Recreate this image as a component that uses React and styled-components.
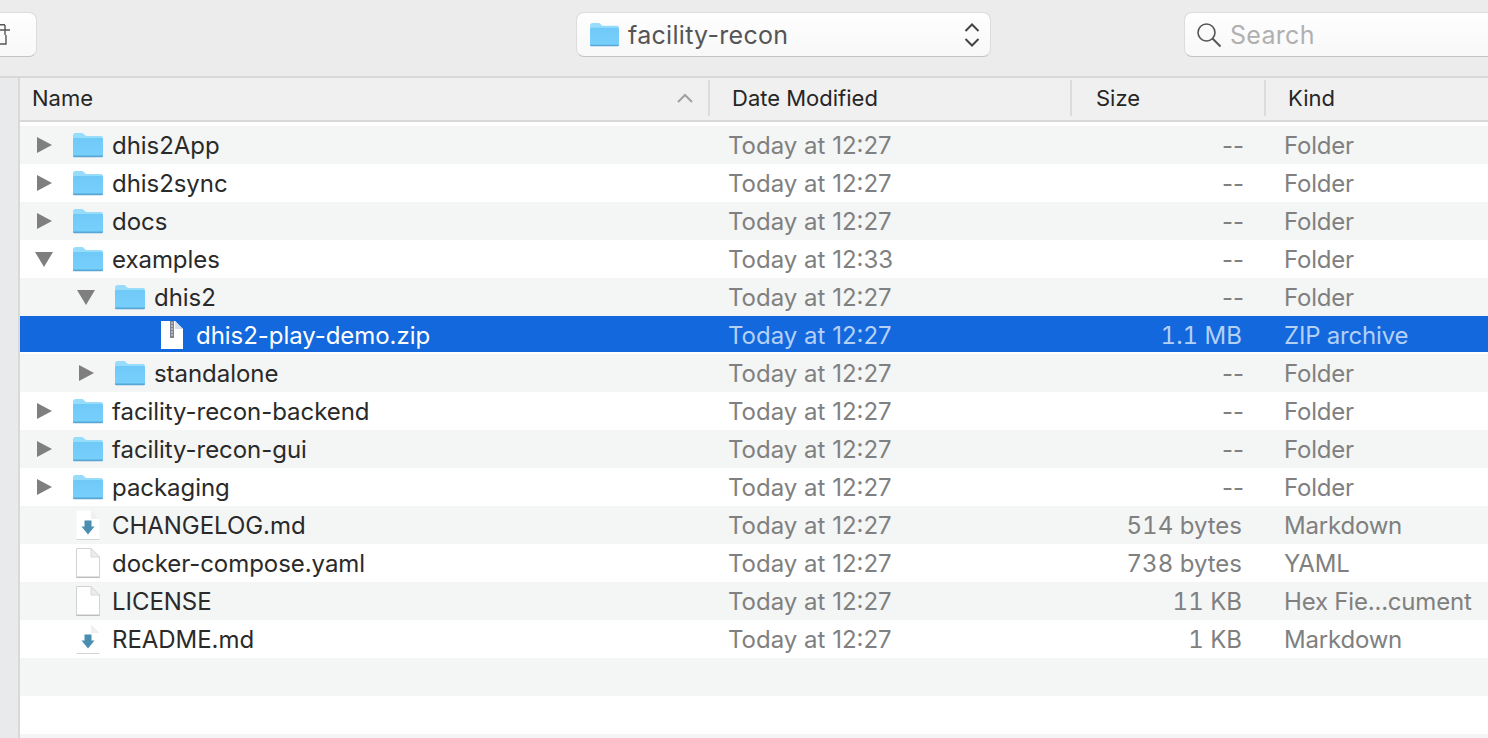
import React from "react";
import styled, { createGlobalStyle } from "styled-components";

const Global = createGlobalStyle`
  html, body { margin: 0; padding: 0; background: #fff; overflow: hidden; }
  body { font-family: Inter, "Liberation Sans", sans-serif; }
`;
const Page = styled.div`
  width: 1488px; height: 738px; overflow: hidden; display: flex; flex-direction: column;
`;
const Toolbar = styled.div`
  flex: none; background: #ececec; border-bottom: 2px solid #d8d8d8;
  display: flex; align-items: flex-start; padding-top: 12px; height: 64px;
`;
const ToolButton = styled.div`
  width: 37px; height: 45px; flex: none; box-sizing: border-box; background: linear-gradient(#fefefe, #f8f8f8);
  border-radius: 0 8px 8px 0; border: 1px solid #dcdcdc; border-left: none; border-bottom-color: #c4c4c4;
  display: flex; align-items: center; overflow: hidden;
`;
const PathPopup = styled.div`
  width: 415px; height: 45px; flex: none; margin-left: 539px; box-sizing: border-box;
  background: linear-gradient(#fefefe, #f8f8f8); border-radius: 8px; border: 1px solid #dcdcdc; border-bottom-color: #c4c4c4;
  display: flex; align-items: center; padding: 0 10px 0 12px; gap: 8px;
  font-size: 25px; color: #555; letter-spacing: 0.3px;
`;
const PathLabel = styled.span` flex: 1; `;
const SearchField = styled.div`
  flex: none; width: 320px; height: 45px; margin-left: 193px; box-sizing: border-box;
  background: linear-gradient(#fefefe, #f8f8f8); border-radius: 8px 0 0 8px; border: 1px solid #dcdcdc; border-right: none; border-bottom-color: #c4c4c4;
  display: flex; align-items: center; padding-left: 11px; gap: 8px;
  font-size: 25px; color: #b0b0b0; letter-spacing: 0.3px;
`;
const Main = styled.div` flex: 1; display: flex; min-height: 0; `;
const Sidebar = styled.div`
  width: 18px; flex: none; background: #e9eaeb; border-right: 2px solid #d9d9d9;
`;
const ListPane = styled.div` flex: 1; min-width: 0; display: flex; flex-direction: column; `;
const Header = styled.div`
  height: 40px; flex: none; background: #f0f0f0; border-bottom: 2px solid #d8d8d8; padding-bottom: 2px;
  display: grid; grid-template-columns: 690px 362px 194px 1fr; align-items: center;
  font-size: 22px; color: #262626;
`;
const HeadCell = styled.div`
  height: 36px; display: flex; align-items: center; justify-content: space-between; box-sizing: border-box;
  padding-left: ${p => p.$pad}px; padding-right: 15px;
  border-right: ${p => (p.$last ? "none" : "2px solid #dcdcdc")};
`;
const Rows = styled.div` padding-top: 4px; flex: 1; `;
const Row = styled.div`
  height: 38px; display: grid; grid-template-columns: 690px 362px 194px 1fr; align-items: center;
  font-size: 24px;
  background: ${p => (p.$selected ? "#1268dc" : p.$odd ? "#f4f5f5" : "#fff")};
  box-shadow: ${p => (p.$selected ? "inset 0 -2px 0 #fff" : "none")};
  color: ${p => (p.$selected ? "#fff" : "#2a2a2a")};
`;
const NameCell = styled.div`
  display: flex; align-items: center; height: 100%; padding-left: ${p => p.$depth * 42}px; white-space: nowrap;
  letter-spacing: -0.05px;
`;
const TriangleSlot = styled.div` width: 52px; flex: none; display: flex; justify-content: flex-start; padding-left: 16px; box-sizing: border-box; `;
const IconSlot = styled.div`
  width: 40px; flex: none; display: flex; justify-content: flex-start;
  padding-left: ${p => (p.$doc ? 4 : 0)}px; box-sizing: border-box;
`;
const mutedColor = p => (p.$selected ? "#b4d0f7" : "#808080");
const DateCell = styled.div`
  padding-left: 18px; color: ${mutedColor};
`;
const SizeCell = styled.div`
  text-align: right; padding-right: ${p => (p.$empty ? 22 : 24)}px;
  font-feature-settings: ${p => (p.$empty ? "normal" : '"tnum"')};
  color: ${mutedColor};
`;
const KindCell = styled.div`
  padding-left: 18px; white-space: nowrap; letter-spacing: -0.2px;
  color: ${mutedColor};
`;

const Folder = ({ w = 32, h = 26 }) => (
  <svg width={w} height={h} viewBox="0 0 32 26">
    <defs>
      <linearGradient id="fb" x1="0" y1="0" x2="0" y2="1">
        <stop offset="0" stopColor="#6fc9f7" />
        <stop offset="1" stopColor="#78d0fc" />
      </linearGradient>
    </defs>
    <path d="M1 3.5C1 2 2 1 3.5 1H9.5C11 1 11.5 1.6 12.3 2.6C12.9 3.4 13.5 4 14.5 4H29C30.4 4 31 5 31 6V23C31 24.3 30.3 25 29 25H3C1.7 25 1 24.3 1 23Z" fill="#98dcfc" />
    <path d="M1 7.5C1 6.6 1.6 6 2.5 6H29.5C30.4 6 31 6.6 31 7.5V23C31 24.3 30.3 25 29 25H3C1.7 25 1 24.3 1 23Z" fill="url(#fb)" />
    <path d="M1 23.6H31V23.9C31 24.6 30.3 25.2 29 25.2H3C1.7 25.2 1 24.6 1 23.9Z" fill="#56a6d6" />
  </svg>
);
const TriRight = () => (
  <svg width="16" height="18" viewBox="0 0 16 18"><path d="M1 1L16 9L1 17Z" fill="#7f7f7f" /></svg>
);
const TriDown = () => (
  <svg width="18" height="16" viewBox="0 0 18 16" overflow="visible"><path d="M-1 1H17L8 16Z" fill="#7f7f7f" /></svg>
);
const ZipDoc = () => (
  <svg width="24" height="30" viewBox="0 0 24 30">
    <path d="M1 1H15L23 9V29H1Z" fill="#fff" />
    <path d="M15 1V9H23" fill="#d8dfe9" />
    <rect x="10" y="1" width="4" height="17" fill="#7d8490" />
    <path d="M11 3h2M11 6h2M11 9h2M11 12h2M11 15h2" stroke="#e4e4e4" strokeWidth="1" />
  </svg>
);
const PlainDoc = () => (
  <svg width="24" height="30" viewBox="0 0 24 30">
    <path d="M0.5 0.5H15L23.5 9V29.5H0.5Z" fill="#fff" stroke="#d2d2d2" strokeWidth="1" />
    <path d="M15 0.5V9H23.5Z" fill="#ececec" stroke="#d8d8d8" strokeWidth="1" />
    <path d="M0.5 29.3H23.5" stroke="#bdbdbd" strokeWidth="1.5" />
  </svg>
);
const MdDoc = () => (
  <svg width="24" height="30" viewBox="0 0 24 30">
    <path d="M0.5 0.5H15L23.5 9V29.5H0.5Z" fill="#fff" />
    <path d="M15 0.5V9H23.5Z" fill="#f0f0f0" />
    <path d="M0.5 29.5H23.5" stroke="#d4d4d4" strokeWidth="1" />
    <path d="M8.5 10.5H15.5V16.5H18.5L12 24.5L5.5 16.5H8.5Z" fill="#4b8fb0" />
  </svg>
);

const rows = [
  { n: "dhis2App", d: 0, t: "r", i: "f", date: "12:27", s: "--", k: "Folder" },
  { n: "dhis2sync", d: 0, t: "r", i: "f", date: "12:27", s: "--", k: "Folder" },
  { n: "docs", d: 0, t: "r", i: "f", date: "12:27", s: "--", k: "Folder" },
  { n: "examples", d: 0, t: "d", i: "f", date: "12:33", s: "--", k: "Folder" },
  { n: "dhis2", d: 1, t: "d", i: "f", date: "12:27", s: "--", k: "Folder" },
  { n: "dhis2-play-demo.zip", d: 2, i: "z", date: "12:27", s: "1.1 MB", k: "ZIP archive", sel: true },
  { n: "standalone", d: 1, t: "r", i: "f", date: "12:27", s: "--", k: "Folder" },
  { n: "facility-recon-backend", d: 0, t: "r", i: "f", date: "12:27", s: "--", k: "Folder" },
  { n: "facility-recon-gui", d: 0, t: "r", i: "f", date: "12:27", s: "--", k: "Folder" },
  { n: "packaging", d: 0, t: "r", i: "f", date: "12:27", s: "--", k: "Folder" },
  { n: "CHANGELOG.md", d: 0, i: "m", date: "12:27", s: "514 bytes", k: "Markdown" },
  { n: "docker-compose.yaml", d: 0, i: "p", date: "12:27", s: "738 bytes", k: "YAML" },
  { n: "LICENSE", d: 0, i: "p", date: "12:27", s: "11 KB", k: "Hex Fie...cument" },
  { n: "README.md", d: 0, i: "m", date: "12:27", s: "1 KB", k: "Markdown" },
];
const icons = { f: <Folder />, z: <ZipDoc />, m: <MdDoc />, p: <PlainDoc /> };

export default function App() {
  return (
    <Page>
      <Global />
      <Toolbar>
        <ToolButton>
          <svg width="12" height="24" viewBox="0 0 12 24" fill="none" stroke="#555" strokeWidth="1.4">
            <path d="M0 1.7H5M6 12V21H0" />
            <path d="M0 7H10M5 2V12" />
          </svg>
        </ToolButton>
        <PathPopup>
          <Folder w={31} h={25} />
          <PathLabel>facility-recon</PathLabel>
          <svg width="16" height="26" viewBox="0 0 16 26" fill="none" stroke="#444" strokeWidth="2">
            <path d="M1.5 9L8 2.5L14.5 9M1.5 17L8 23.5L14.5 17" />
          </svg>
        </PathPopup>
        <SearchField>
          <svg width="26" height="26" viewBox="0 0 26 26" fill="none" stroke="#555" strokeWidth="1.6">
            <circle cx="10.5" cy="10.5" r="8.5" />
            <path d="M16.5 16.5L24.5 24.5" strokeWidth="2" />
          </svg>
          Search
        </SearchField>
      </Toolbar>
      <Main>
        <Sidebar />
        <ListPane>
          <Header>
            <HeadCell $pad={12}>
              Name
              <svg width="16" height="10" viewBox="0 0 16 10" fill="none" stroke="#a0a0a0" strokeWidth="2">
                <path d="M1 9L8 2L15 9" />
              </svg>
            </HeadCell>
            <HeadCell $pad={22}>Date Modified</HeadCell>
            <HeadCell $pad={24}>Size</HeadCell>
            <HeadCell $pad={22} $last>Kind</HeadCell>
          </Header>
          <Rows>
            {rows.map((r, i) => (
              <Row key={r.n} $odd={i % 2 === 0} $selected={r.sel}>
                <NameCell $depth={r.d}>
                  <TriangleSlot>{r.t === "r" ? <TriRight /> : r.t === "d" ? <TriDown /> : null}</TriangleSlot>
                  <IconSlot $doc={r.i !== "f"}>{icons[r.i]}</IconSlot>
                  {r.n}
                </NameCell>
                <DateCell $selected={r.sel}>Today at {r.date}</DateCell>
                <SizeCell $selected={r.sel} $empty={r.s === "--"}>{r.s}</SizeCell>
                <KindCell $selected={r.sel}>{r.k}</KindCell>
              </Row>
            ))}
            <Row $odd />
            <Row />
            <Row $odd />
          </Rows>
        </ListPane>
      </Main>
    </Page>
  );
}
